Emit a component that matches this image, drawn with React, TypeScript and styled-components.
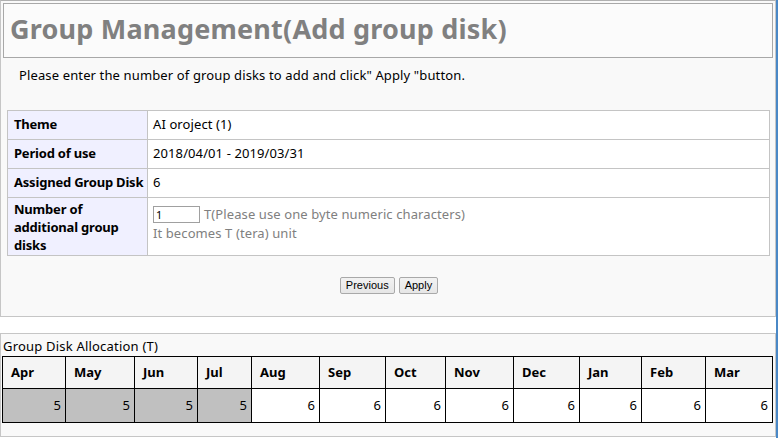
import { createGlobalStyle, styled } from "styled-components";

const GlobalStyle = createGlobalStyle`
  html, body {
    margin: 0;
    padding: 0;
    background: #ffffff;
  }
  body {
    font-family: "Noto Sans", "DejaVu Sans", sans-serif;
    font-size: 13px;
    color: #000000;
  }
`;

const months = [
  { name: "Apr", value: 5, width: 63, used: true },
  { name: "May", value: 5, width: 69, used: true },
  { name: "Jun", value: 5, width: 63, used: true },
  { name: "Jul", value: 5, width: 54, used: true },
  { name: "Aug", value: 6, width: 68, used: false },
  { name: "Sep", value: 6, width: 66, used: false },
  { name: "Oct", value: 6, width: 60, used: false },
  { name: "Nov", value: 6, width: 68, used: false },
  { name: "Dec", value: 6, width: 66, used: false },
  { name: "Jan", value: 6, width: 62, used: false },
  { name: "Feb", value: 6, width: 64, used: false },
  { name: "Mar", value: 6, width: 67, used: false },
];

export default function App() {
  return (
    <>
      <GlobalStyle />
      <Window>
        <Content>
          <MainPanel>
            <TitleBox>
              <Title>Group Management(Add group disk)</Title>
            </TitleBox>
            <Lead>
              Please enter the number of group disks to add and click" Apply
              "button.
            </Lead>
            <InfoTable>
              <colgroup>
                <col style={{ width: 140 }} />
                <col />
              </colgroup>
              <tbody>
                <tr>
                  <Th>Theme</Th>
                  <Td>AI oroject (1)</Td>
                </tr>
                <tr>
                  <Th>Period of use</Th>
                  <Td>2018/04/01 - 2019/03/31</Td>
                </tr>
                <tr>
                  <Th>Assigned Group Disk</Th>
                  <Td>6</Td>
                </tr>
                <tr>
                  <Th $tall>
                    Number of
                    <br />
                    additional group
                    <br />
                    disks
                  </Th>
                  <Td $tall>
                    <InputLine>
                      <NumberInput defaultValue="1" />
                      <Hint>T(Please use one byte numeric characters)</Hint>
                    </InputLine>
                    <Hint>It becomes T (tera) unit</Hint>
                  </Td>
                </tr>
              </tbody>
            </InfoTable>
            <ButtonRow>
              <Button>Previous</Button>
              <Button>Apply</Button>
            </ButtonRow>
          </MainPanel>

          <AllocPanel>
            <AllocCaption>Group Disk Allocation (T)</AllocCaption>
            <MonthTable>
              <colgroup>
                {months.map((m) => (
                  <col key={m.name} style={{ width: m.width }} />
                ))}
              </colgroup>
              <thead>
                <tr>
                  {months.map((m) => (
                    <MonthHead key={m.name}>{m.name}</MonthHead>
                  ))}
                </tr>
              </thead>
              <tbody>
                <tr>
                  {months.map((m) => (
                    <MonthValue key={m.name} $used={m.used}>
                      {m.value}
                    </MonthValue>
                  ))}
                </tr>
              </tbody>
            </MonthTable>
          </AllocPanel>
        </Content>
        <WindowEdge />
      </Window>
    </>
  );
}

const Window = styled.div`
  display: flex;
  width: 778px;
  height: 438px;
  overflow: hidden;
`;

const Content = styled.div`
  flex: 1;
  display: flex;
  flex-direction: column;
  gap: 16px;
`;

const WindowEdge = styled.div`
  width: 2px;
  background: #4a88c6;
`;

const MainPanel = styled.div`
  height: 317px;
  box-sizing: border-box;
  border: 1px solid #c6c6c6;
  border-top-color: #b0b0b0;
  background: #f9f9f9;
  padding: 2px 2px 0 2px;
`;

const TitleBox = styled.div`
  height: 55px;
  box-sizing: border-box;
  border: 1px solid #a8a8a8;
  background: #fbfbfb;
  display: flex;
  align-items: center;
  padding: 0 0 4px 6px;
`;

const Title = styled.h1`
  margin: 0;
  font-family: "Noto Sans", "DejaVu Sans", sans-serif;
  font-size: 27px;
  line-height: 32px;
  font-weight: 700;
  letter-spacing: 0.2px;
  color: #808080;
`;

const Lead = styled.p`
  margin: 8px 0 0 16px;
  height: 44px;
  font-size: 13px;
  line-height: 18px;
  letter-spacing: 0.13px;
`;

const InfoTable = styled.table`
  margin-left: 4px;
  width: 763px;
  border-collapse: collapse;
  table-layout: fixed;
  background: #ffffff;
`;

const Th = styled.th<{ $tall?: boolean }>`
  height: ${(p) => (p.$tall ? "58px" : "29px")};
  box-sizing: border-box;
  border: 1px solid #c4c4c4;
  background: #f0f0ff;
  text-align: left;
  white-space: nowrap;
  overflow: hidden;
  vertical-align: ${(p) => (p.$tall ? "middle" : "top")};
  padding: ${(p) => (p.$tall ? "0 2px 0 6px" : "4px 2px 0 6px")};
  font-size: 13px;
  font-weight: 700;
  letter-spacing: -0.2px;
  line-height: 18px;
`;

const Td = styled.td<{ $tall?: boolean }>`
  border: 1px solid #c4c4c4;
  padding: ${(p) => (p.$tall ? "7px 5px 0" : "4px 5px 0")};
  vertical-align: top;
  font-size: 13px;
  line-height: 18px;
  letter-spacing: 0.1px;
`;

const InputLine = styled.div`
  display: flex;
  align-items: center;
  gap: 4px;
  margin-bottom: 1px;
`;

const NumberInput = styled.input`
  width: 47px;
  height: 17px;
  box-sizing: border-box;
  border: 1px solid #a0a0a0;
  padding: 0 2px;
  font-family: "Noto Sans", "DejaVu Sans", sans-serif;
  font-size: 11px;
  background: #ffffff;
`;

const Hint = styled.span`
  display: block;
  color: #808080;
  font-size: 13px;
  line-height: 18px;
`;

const ButtonRow = styled.div`
  display: flex;
  justify-content: center;
  gap: 4px;
  margin-top: 21px;
  padding-left: 2px;
`;

const Button = styled.button`
  height: 17px;
  padding: 0 5px;
  border: 1px solid #a9a9a9;
  border-radius: 2px;
  background: linear-gradient(#f2f2f2, #e6e6e6);
  font-family: "Liberation Sans", Arial, sans-serif;
  font-size: 11px;
  line-height: 15px;
  color: #000000;
  cursor: pointer;
`;

const AllocPanel = styled.div`
  height: 104px;
  box-sizing: border-box;
  border: 1px solid #c6c6c6;
  background: #f9f9f9;
  padding: 3px 0 0 1px;
`;

const AllocCaption = styled.div`
  padding-left: 1px;
  font-size: 13px;
  line-height: 19px;
  letter-spacing: 0.2px;
  color: #000000;
`;

const MonthTable = styled.table`
  width: 771px;
  border-collapse: collapse;
  table-layout: fixed;
`;

const MonthHead = styled.th`
  height: 32px;
  box-sizing: border-box;
  border: 1px solid #000000;
  background: #f4f4f4;
  text-align: left;
  padding: 0 8px 2px;
  font-size: 13px;
  font-weight: 700;
`;

const MonthValue = styled.td<{ $used: boolean }>`
  height: 34px;
  box-sizing: border-box;
  border: 1px solid #000000;
  background: ${(p) => (p.$used ? "#c0c0c0" : "#ffffff")};
  text-align: right;
  padding: 0 4px 2px;
  font-size: 13px;
`;
